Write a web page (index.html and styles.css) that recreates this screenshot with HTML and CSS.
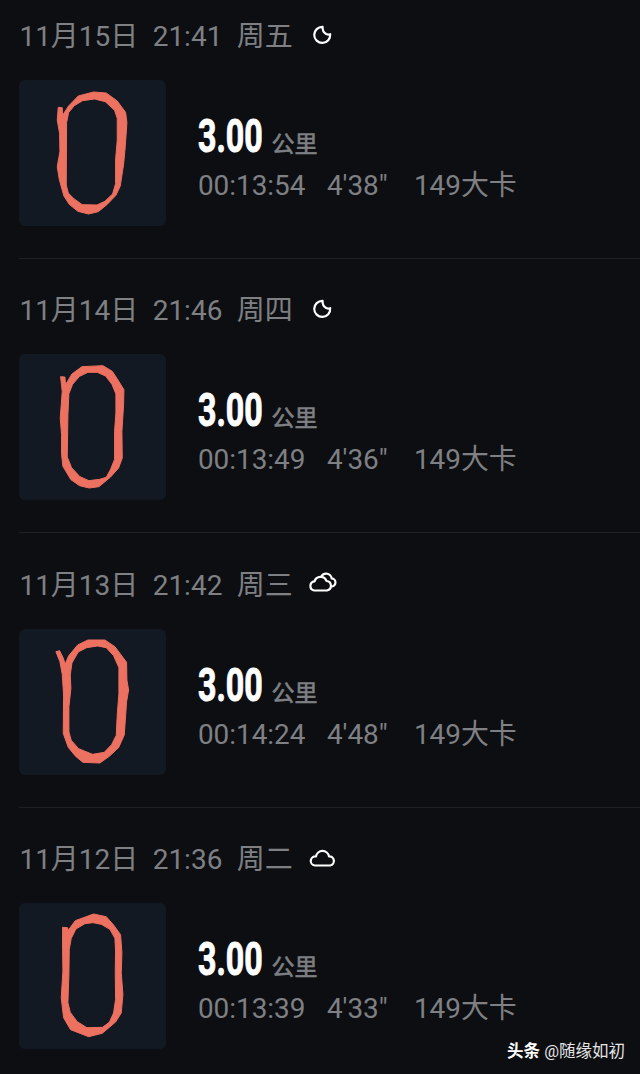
FILE: index.html
```
<!DOCTYPE html>
<html lang="zh-CN">
<head>
    <meta charset="UTF-8">
    <meta name="viewport" content="width=device-width, initial-scale=1.0">
    <title>跑步记录</title>
    <link rel="stylesheet" href="styles.css">
</head>
<body>
    <main class="runs">
        <article class="run">
            <header class="run-date">
                <span>11月15日</span><span>21:41</span><span>周五</span>
                <svg class="weather" viewBox="0 0 30 24"><path d="M14.6 3.9A8 8 0 1 0 22.2 11.2Q20.5 12 18.2 11Q14.3 9 14.6 3.9Z"/></svg>
            </header>
            <div class="run-body">
                <svg class="track" viewBox="29 30 438 438"><path d="M146 112L158 113L159 136L177 108L206 78L252 66L290 69L323 93L348 127L352 158L347 230L342 283L332 348L319 376L292 404L266 425L237 432L205 424L179 403L163 378L149 328L143 290L151 245L150 190L143 150ZM219 92L194 107L177 128L171 158L170 345L176 369L194 387L218 404L262 405L286 394L309 372L318 341L318 270L323 210L323 145L315 121L287 95L255 87Z"/></svg>
                <div class="run-info">
                    <div class="distance"><b>3.00</b><span>公里</span></div>
                    <div class="stats"><span class="time">00:13:54</span><span class="pace">4'38"</span><span>149大卡</span></div>
                </div>
            </div>
        </article>

        <article class="run">
            <header class="run-date">
                <span>11月14日</span><span>21:46</span><span>周四</span>
                <svg class="weather" viewBox="0 0 30 24"><path d="M14.6 3.9A8 8 0 1 0 22.2 11.2Q20.5 12 18.2 11Q14.3 9 14.6 3.9Z"/></svg>
            </header>
            <div class="run-body">
                <svg class="track" viewBox="29 28 438 438"><path d="M153 96L166 97L168 120L187 88L217 66L280 63L308 80L322 101L343 135L342 180L337 260L338 340L327 370L303 397L268 426L239 430L210 423L184 405L160 365L156 330L156 270L152 220L158 140ZM235 83L210 95L189 119L178 147L175 210L173 337L186 369L211 396L238 408L270 404L290 398L303 374L315 344L315 260L319 205L319 148L307 119L288 94L263 83Z"/></svg>
                <div class="run-info">
                    <div class="distance"><b>3.00</b><span>公里</span></div>
                    <div class="stats"><span class="time">00:13:49</span><span class="pace">4'36"</span><span>149大卡</span></div>
                </div>
            </div>
        </article>

        <article class="run">
            <header class="run-date">
                <span>11月13日</span><span>21:42</span><span>周三</span>
                <svg class="weather" viewBox="0 0 30 24"><path d="M6.2 19.5A4.6 4.6 0 0 1 6.5 10.4A6.3 6.3 0 0 1 18.5 10A4.8 4.8 0 0 1 19 19.5ZM13.5 5.2A5.5 5.5 0 0 1 23.6 7.4A4 4 0 0 1 23.2 15.5"/></svg>
            </header>
            <div class="run-body">
                <svg class="track" viewBox="29 27 438 438"><path d="M139 95L150 92L160 112L167 132L177 108L204 75L235 60L286 60L316 80L334 104L351 127L352 180L357 210L351 245L344 345L327 383L299 409L271 429L220 427L198 409L176 382L161 340L162 225L158 163L151 125ZM231 83L206 96L187 129L182 165L184 205L178 260L178 336L185 361L207 386L249 403L284 397L306 374L320 346L323 285L328 220L328 143L312 107L290 83L264 78Z"/></svg>
                <div class="run-info">
                    <div class="distance"><b>3.00</b><span>公里</span></div>
                    <div class="stats"><span class="time">00:14:24</span><span class="pace">4'48"</span><span>149大卡</span></div>
                </div>
            </div>
        </article>

        <article class="run">
            <header class="run-date">
                <span>11月12日</span><span>21:36</span><span>周二</span>
                <svg class="weather" viewBox="0 0 30 24"><path d="M6.7 19.5A4.5 4.5 0 0 1 8 10.4A6.6 6.6 0 0 1 21 10.4A4.6 4.6 0 0 1 22.2 19.5Z"/></svg>
            </header>
            <div class="run-body">
                <svg class="track" viewBox="29 26 438 438"><path d="M159 99L174 100L176 108L197 79L252 59L290 67L312 92L333 121L337 175L335 235L340 300L335 356L318 383L278 417L237 427L183 406L162 370L155 310L160 230L159 165ZM226 88L199 104L185 132L179 165L178 240L175 325L182 354L203 382L232 400L279 399L299 384L312 356L318 315L317 235L318 170L316 132L301 105L275 90L250 85Z"/></svg>
                <div class="run-info">
                    <div class="distance"><b>3.00</b><span>公里</span></div>
                    <div class="stats"><span class="time">00:13:39</span><span class="pace">4'33"</span><span>149大卡</span></div>
                </div>
            </div>
        </article>
    </main>

    <div class="watermark"><b>头条</b> @随缘如初</div>
</body>
</html>
```

FILE: styles.css
```
* {
    box-sizing: border-box;
}
body {
    position: relative;
    height: 1074px;
    margin: 0;
    overflow: hidden;
    background: #0d0e12;
    color: #7e8084;
    font-family: Roboto, "Noto Sans CJK SC", sans-serif;
    font-size: 28px;
}
.runs {
    padding-left: 19.4px;
}
.run {
    padding: 34.4px 0 32px;
    border-bottom: 1px solid #1f2024;
}
.run:first-child {
    padding-top: 19px;
}
.run:last-child {
    border-bottom: none;
}
.run-date {
    display: flex;
    align-items: center;
    gap: 14.3px;
    height: 36px;
    margin-bottom: 25px;
    line-height: 36px;
}
.weather {
    width: 30px;
    height: 24px;
    margin: -5px 0 0 1px;
    fill: none;
    stroke: #fff;
    stroke-width: 2.2;
    stroke-linejoin: round;
    stroke-linecap: round;
}
.run-body {
    display: flex;
    gap: 32px;
}
.track {
    width: 146.5px;
    height: 146px;
    border-radius: 6px;
    background: #131922;
    fill: #ed7160;
    fill-rule: evenodd;
    stroke: #ed7160;
    stroke-width: 3;
    stroke-linejoin: round;
}
.run-info {
    padding-top: 32px;
}
.distance {
    display: flex;
    align-items: baseline;
    height: 56px;
    line-height: 48px;
}
.distance b {
    width: 73.5px;
    color: #fff;
    font-size: 47px;
    font-weight: 700;
    transform: scaleX(0.685);
    transform-origin: left;
    -webkit-text-stroke: 1px #fff;
}
.distance span {
    font-size: 23px;
    -webkit-text-stroke: 0.6px #7e8084;
}
.stats {
    display: flex;
    font-size: 27.9px;
    line-height: 36px;
}
.time {
    width: 129px;
}
.pace {
    width: 87px;
}
.watermark {
    position: absolute;
    right: 15px;
    bottom: 10px;
    color: #e4e4e4;
    font-size: 16.5px;
    line-height: 24px;
}
.watermark b {
    color: #fff;
}
```
